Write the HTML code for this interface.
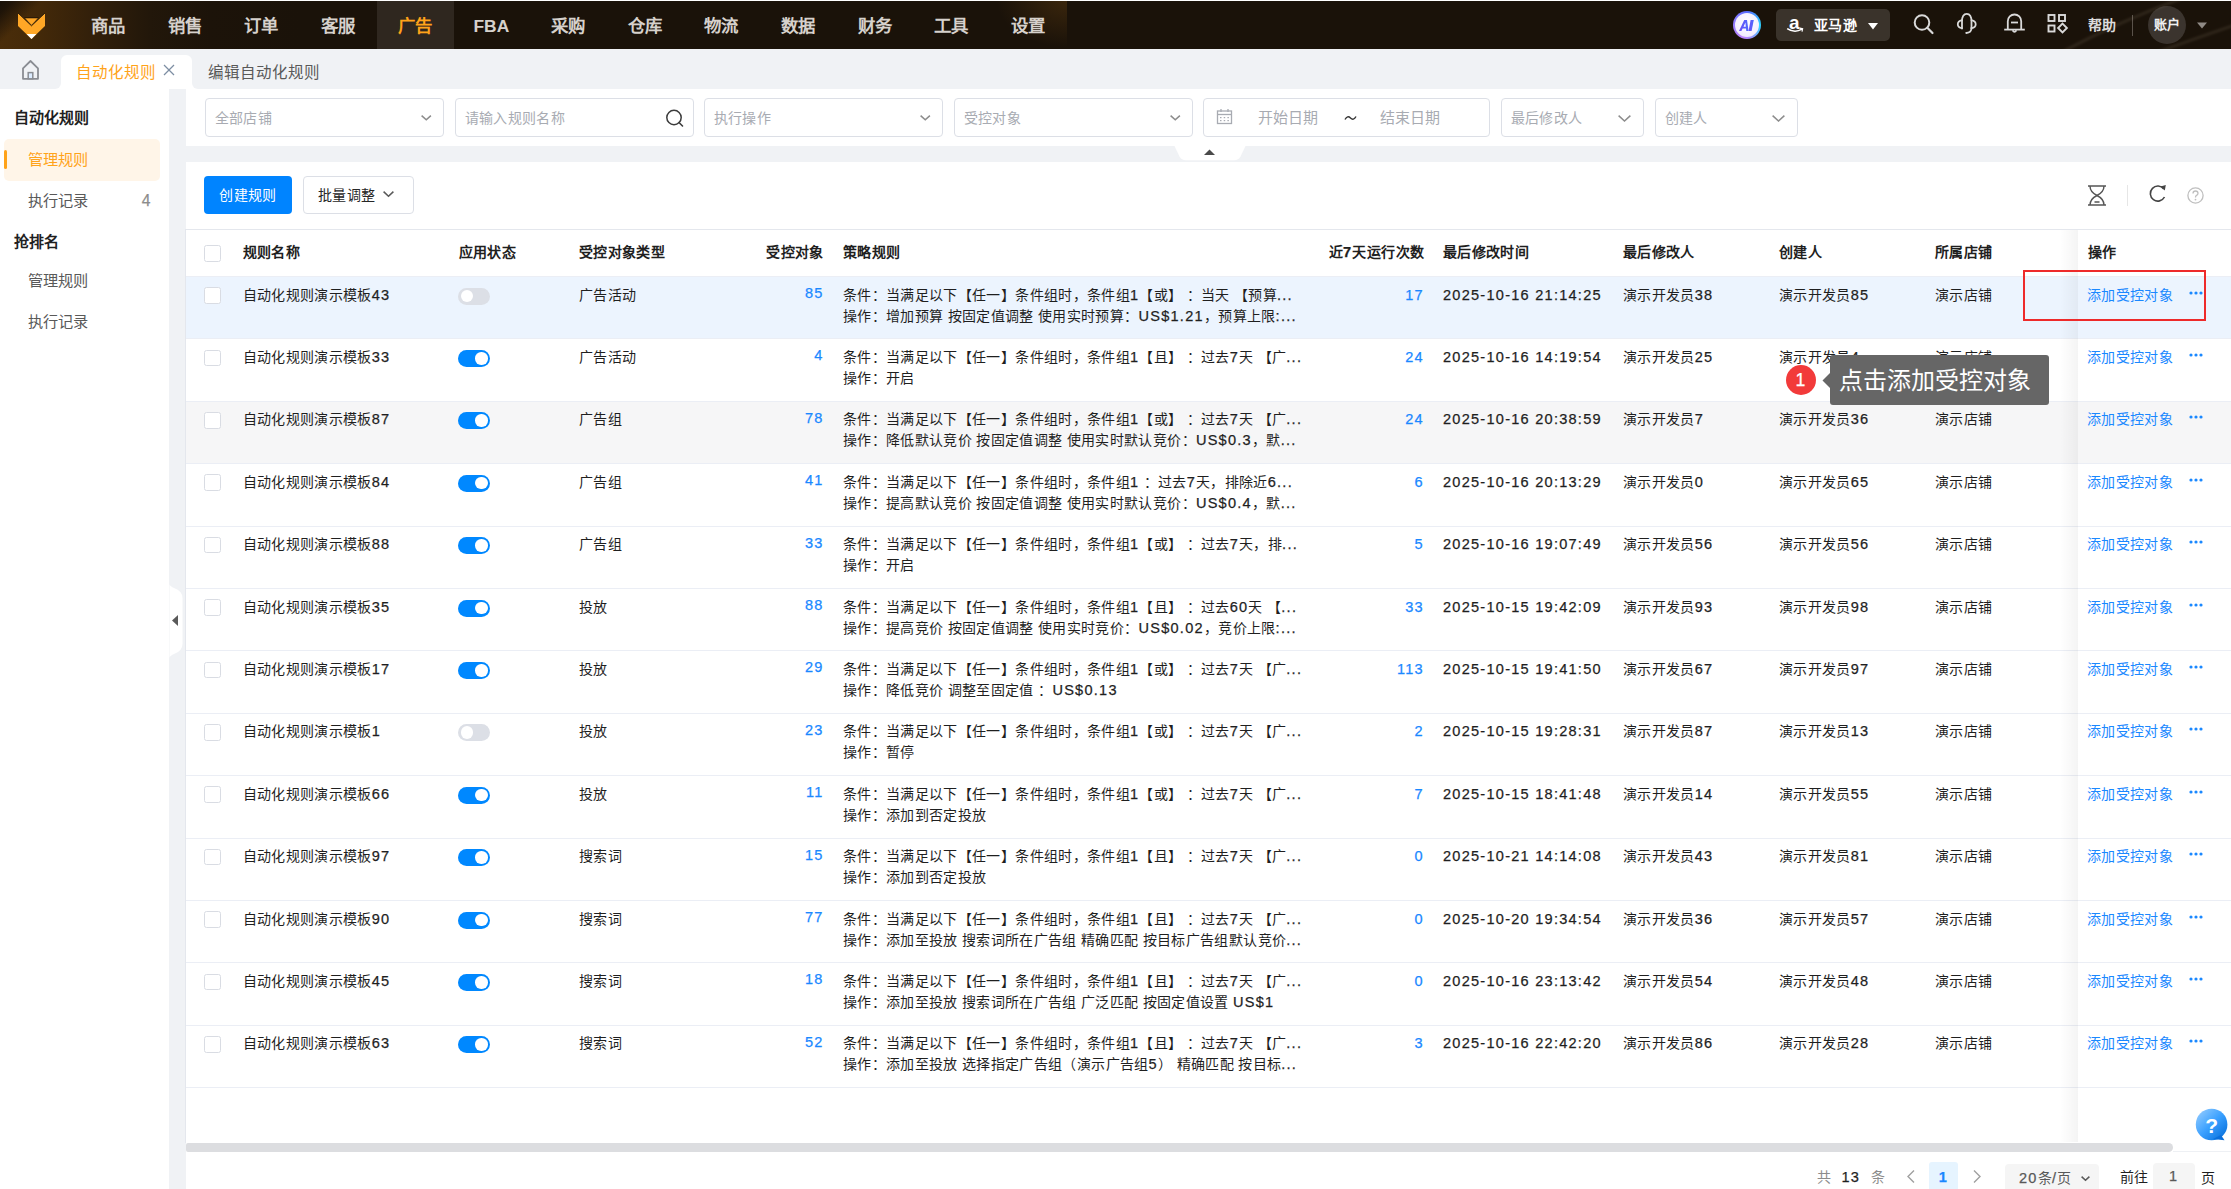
<!DOCTYPE html>
<html lang="zh-CN"><head><meta charset="utf-8"><title>自动化规则</title>
<style>
html,body{margin:0;padding:0;}
body{width:2231px;height:1189px;overflow:hidden;position:relative;background:#f0f2f5;font-family:"Liberation Sans",sans-serif;letter-spacing:0.35px;}
.a{font-size:1.04em;letter-spacing:1.25px;-webkit-text-stroke:0.25px currentColor;}
</style></head><body>
<div style="position:absolute;left:0.00px;top:0.00px;width:2231.00px;height:1.00px;background:#fff"></div>
<div style="position:absolute;left:0.00px;top:1.00px;width:2231.00px;height:48.00px;background:#1a1209"></div>
<div style="position:absolute;left:0;top:1px;width:1067px;height:48px;background:linear-gradient(135deg,rgba(24,16,8,1) 0px,rgba(24,16,8,0.85) 9px,rgba(24,16,8,0) 30px) 0 0/80px 48px no-repeat,radial-gradient(ellipse 70px 46px at 100% 0%,rgba(110,70,18,0.38),rgba(26,18,9,0)) 100% 0/80px 48px no-repeat,linear-gradient(90deg,#4a2d0a 0px,#432909 40px,#33200a 90px,#22170a 150px,#1c1309 210px,#1a1209 300px)"></div>
<svg style="position:absolute;left:17px;top:12px" width="30" height="29" viewBox="17 12 30 29">
<polygon points="18,13 31.5,25.5 45,13 45,26 31.5,39 18,26" fill="#ffa726"/>
<polygon points="25,18 38,18 31.5,25" fill="#ffa726"/>
<polyline points="18,13 31.5,25.8 45,13" fill="none" stroke="#1e1408" stroke-width="0.9"/>
<line x1="24.5" y1="17.8" x2="38.5" y2="17.8" stroke="#1e1408" stroke-width="0.9"/>
<polygon points="26.6,34 36.4,34 31.5,39" fill="#fff"/>
</svg>
<div style="position:absolute;left:69.67px;top:15.7px;width:76.67px;text-align:center;letter-spacing:0;font-size:17.4px;line-height:20px;font-weight:700;color:#d6d1cc;white-space:nowrap">商品</div>
<div style="position:absolute;left:146.34px;top:15.7px;width:76.67px;text-align:center;letter-spacing:0;font-size:17.4px;line-height:20px;font-weight:700;color:#d6d1cc;white-space:nowrap">销售</div>
<div style="position:absolute;left:223.01px;top:15.7px;width:76.67px;text-align:center;letter-spacing:0;font-size:17.4px;line-height:20px;font-weight:700;color:#d6d1cc;white-space:nowrap">订单</div>
<div style="position:absolute;left:299.68px;top:15.7px;width:76.67px;text-align:center;letter-spacing:0;font-size:17.4px;line-height:20px;font-weight:700;color:#d6d1cc;white-space:nowrap">客服</div>
<div style="position:absolute;left:376.85px;top:1.00px;width:76.67px;height:48.00px;background:#2f271f"></div>
<div style="position:absolute;left:376.35px;top:15.7px;width:76.67px;text-align:center;letter-spacing:0;font-size:17.4px;line-height:20px;font-weight:700;color:#ffa31a;white-space:nowrap">广告</div>
<div style="position:absolute;left:453.02px;top:15.7px;width:76.67px;text-align:center;letter-spacing:0;font-size:17.4px;line-height:20px;font-weight:700;color:#d6d1cc;white-space:nowrap">FBA</div>
<div style="position:absolute;left:529.69px;top:15.7px;width:76.67px;text-align:center;letter-spacing:0;font-size:17.4px;line-height:20px;font-weight:700;color:#d6d1cc;white-space:nowrap">采购</div>
<div style="position:absolute;left:606.36px;top:15.7px;width:76.67px;text-align:center;letter-spacing:0;font-size:17.4px;line-height:20px;font-weight:700;color:#d6d1cc;white-space:nowrap">仓库</div>
<div style="position:absolute;left:683.03px;top:15.7px;width:76.67px;text-align:center;letter-spacing:0;font-size:17.4px;line-height:20px;font-weight:700;color:#d6d1cc;white-space:nowrap">物流</div>
<div style="position:absolute;left:759.70px;top:15.7px;width:76.67px;text-align:center;letter-spacing:0;font-size:17.4px;line-height:20px;font-weight:700;color:#d6d1cc;white-space:nowrap">数据</div>
<div style="position:absolute;left:836.37px;top:15.7px;width:76.67px;text-align:center;letter-spacing:0;font-size:17.4px;line-height:20px;font-weight:700;color:#d6d1cc;white-space:nowrap">财务</div>
<div style="position:absolute;left:913.04px;top:15.7px;width:76.67px;text-align:center;letter-spacing:0;font-size:17.4px;line-height:20px;font-weight:700;color:#d6d1cc;white-space:nowrap">工具</div>
<div style="position:absolute;left:989.71px;top:15.7px;width:76.67px;text-align:center;letter-spacing:0;font-size:17.4px;line-height:20px;font-weight:700;color:#d6d1cc;white-space:nowrap">设置</div>
<div style="position:absolute;left:1733px;top:11px;width:28px;height:28px;border-radius:50%;background:conic-gradient(from 200deg,#c084fc,#8b7bff 90deg,#5a6cff 160deg,#2ad4ff 250deg,#a98bff 330deg,#c084fc);"></div>
<div style="position:absolute;left:1735px;top:13px;width:24px;height:24px;border-radius:50%;background:radial-gradient(circle at 50% 40%,#ffffff,#f4efff 65%,#e6dcff);"></div>
<svg style="position:absolute;left:1738px;top:19px" width="18" height="13" viewBox="0 0 18 13"><defs><linearGradient id="aig" x1="0" y1="0" x2="1" y2="0"><stop offset="0" stop-color="#6a4df5"/><stop offset="1" stop-color="#4f6bff"/></linearGradient></defs>
<path d="M1 12 L6.2 1 H9 L10.6 12 H8.3 L8 9.6 H4.6 L3.4 12 Z M5.5 7.7 H7.8 L7.4 3.6 Z" fill="url(#aig)"/><path d="M12.6 1 H15.8 L13.6 12 H10.6 Z" fill="url(#aig)"/></svg>
<div style="position:absolute;left:1776.00px;top:9.00px;width:114.00px;height:32.00px;background:#3a332b;border-radius:5px"></div>
<svg style="position:absolute;left:1786px;top:14px" width="20" height="20" viewBox="0 0 20 20">
<text x="3" y="15" font-family="Liberation Sans" font-weight="bold" font-size="19" fill="#fff">a</text>
<path d="M1.2 14.6 Q8.5 19.5 16 15.2" stroke="#fff" stroke-width="1.5" fill="none"/>
<path d="M13.8 14.2 L16.6 14.8 L16 17.6" stroke="#fff" stroke-width="1.2" fill="none"/>
</svg>
<div style="position:absolute;left:1814.00px;top:15.00px;font-size:14px;line-height:20px;color:#ffffff;font-weight:700;white-space:nowrap;">亚马逊</div>
<svg style="position:absolute;left:1868px;top:22px" width="10" height="8" viewBox="0 0 10 8"><polygon points="0,1 10,1 5,7.5" fill="#fff"/></svg>
<svg style="position:absolute;left:1912px;top:13px" width="24" height="22" viewBox="0 0 24 22">
<circle cx="10" cy="9.5" r="7.3" stroke="#d9d9d9" stroke-width="2" fill="none"/>
<line x1="15.3" y1="14.8" x2="20.5" y2="20" stroke="#d9d9d9" stroke-width="2.2" stroke-linecap="round"/></svg>
<svg style="position:absolute;left:1955px;top:12px" width="24" height="24" viewBox="0 0 24 24" fill="none" stroke="#d9d9d9" stroke-width="1.8" stroke-linecap="round">
<path d="M7 16.5 V9.5 Q7 1.8 11.75 1.8 Q16.5 1.8 16.5 9.5 V16.5"/>
<path d="M7 8.2 Q2.8 9 2.8 12.3 Q2.8 15.6 7 16.2"/>
<path d="M16.5 8.2 Q20.7 9 20.7 12.3 Q20.7 15.6 16.5 16.2"/>
<path d="M16.5 16 Q16.5 20.6 11.2 21"/></svg>
<svg style="position:absolute;left:2003px;top:12px" width="24" height="24" viewBox="0 0 24 24" fill="none" stroke="#d9d9d9" stroke-width="1.8">
<path d="M4.8 17.5 V9.2 A6.7 6.7 0 0 1 18.2 9.2 V17.5"/>
<line x1="1.2" y1="17.6" x2="21.8" y2="17.6"/>
<line x1="8" y1="10.5" x2="15" y2="10.5"/>
<path d="M9.6 18.2 Q11.5 21.6 13.4 18.2"/></svg>
<svg style="position:absolute;left:2046px;top:12px" width="24" height="24" viewBox="0 0 24 24" fill="none" stroke="#d9d9d9" stroke-width="1.9">
<rect x="2.5" y="3" width="6" height="6"/><rect x="13" y="3" width="6" height="6"/><rect x="2.5" y="13.5" width="6" height="6"/>
<polygon points="16.5,11.6 20.9,16 16.5,20.4 12.1,16"/></svg>
<div style="position:absolute;left:2088.00px;top:15.00px;font-size:14px;line-height:20px;color:#dcdcdc;font-weight:700;white-space:nowrap;">帮助</div>
<div style="position:absolute;left:2132.00px;top:15.00px;width:1.00px;height:21.00px;background:#5a524a"></div>
<div style="position:absolute;left:2148.00px;top:6.00px;width:38.00px;height:38.00px;background:#3b342e;border-radius:50%"></div>
<div style="position:absolute;left:2151.00px;top:15.00px;font-size:13px;line-height:20px;color:#f0f0f0;font-weight:700;white-space:nowrap;width:32px;text-align:center">账户</div>
<svg style="position:absolute;left:2196px;top:21px" width="12" height="9" viewBox="0 0 12 9"><polygon points="1,1.5 11,1.5 6,7.5" fill="#8f8a85"/></svg>
<svg style="position:absolute;left:2060px;top:1px" width="171" height="48" viewBox="0 0 171 48">
<defs><filter id="bl" x="-20%" y="-50%" width="140%" height="200%"><feGaussianBlur stdDeviation="1.2"/></filter></defs>
<g filter="url(#bl)" stroke="rgba(255,235,200,0.09)" stroke-width="3" fill="none">
<path d="M0 52 Q60 20 125 -4"/><path d="M95 52 Q140 36 175 24"/></g></svg>
<div style="position:absolute;left:0.00px;top:49.00px;width:2231.00px;height:40.00px;background:#fff"></div>
<div style="position:absolute;left:169.50px;top:83.00px;width:16.00px;height:6.00px;background:#f0f2f5"></div>
<div style="position:absolute;left:0.00px;top:49.00px;width:2231.00px;height:13.00px;background:#f0f2f5"></div>
<div style="position:absolute;left:0.00px;top:49.00px;width:61.00px;height:40.00px;background:#f0f2f5;border-bottom-right-radius:6px"></div>
<div style="position:absolute;left:192.00px;top:49.00px;width:2039.00px;height:40.00px;background:#f0f2f5;border-bottom-left-radius:6px"></div>
<svg style="position:absolute;left:20px;top:58px" width="22" height="23" viewBox="0 0 22 23">
<path d="M3 20.8 V10.3 L10.5 3 L18 10.3 V20.8 Z" stroke="#8a8d93" stroke-width="1.8" fill="none" stroke-linejoin="round"/>
<rect x="8.2" y="14.6" width="4.6" height="6.2" stroke="#8a8d93" stroke-width="1.5" fill="#dcecff"/></svg>
<div style="position:absolute;left:61.00px;top:55.00px;width:131.00px;height:34.00px;background:#fff;border-radius:6px 6px 0 0"></div>
<div style="position:absolute;left:75.80px;top:62.50px;font-size:15.5px;line-height:20px;color:#ffa31a;font-weight:400;white-space:nowrap;letter-spacing:0;">自动化规则</div>
<svg style="position:absolute;left:163px;top:64px" width="12" height="12" viewBox="0 0 12 12">
<line x1="1" y1="1" x2="11" y2="11" stroke="#7d8ea3" stroke-width="1.3"/><line x1="11" y1="1" x2="1" y2="11" stroke="#7d8ea3" stroke-width="1.3"/></svg>
<div style="position:absolute;left:208.00px;top:62.50px;font-size:15.5px;line-height:20px;color:#595959;font-weight:400;white-space:nowrap;letter-spacing:0;">编辑自动化规则</div>
<div style="position:absolute;left:0.00px;top:89.00px;width:169.20px;height:1100.00px;background:#fff"></div>
<div style="position:absolute;left:169.20px;top:89.00px;width:16.30px;height:1100.00px;background:#f0f2f5"></div>
<svg style="position:absolute;left:169px;top:584px" width="15" height="74" viewBox="0 0 15 74">
<path d="M0.5 0 Q0.5 2 5 4 Q13.5 7 13.5 14 V60 Q13.5 67 5 70 Q0.5 72 0.5 74 Z" fill="#fff"/>
<polygon points="3,36.5 9,31 9,42" fill="#5a5a5a"/></svg>
<div style="position:absolute;left:14.00px;top:108.00px;font-size:15px;line-height:20px;color:#1f1f1f;font-weight:700;white-space:nowrap;letter-spacing:0;">自动化规则</div>
<div style="position:absolute;left:4.00px;top:139.00px;width:156.00px;height:41.50px;background:#fff5e8;border-radius:5px"></div>
<div style="position:absolute;left:4.00px;top:150.00px;width:3.00px;height:19.00px;background:#ffa31a;border-radius:2px"></div>
<div style="position:absolute;left:28.00px;top:149.50px;font-size:15.2px;line-height:20px;color:#ffa31a;font-weight:400;white-space:nowrap;letter-spacing:0;">管理规则</div>
<div style="position:absolute;left:28.00px;top:190.50px;font-size:15.2px;line-height:20px;color:#595959;font-weight:400;white-space:nowrap;letter-spacing:0;">执行记录</div>
<div style="position:absolute;right:2079.30px;top:190.50px;font-size:15px;line-height:20px;color:#8c8c8c;font-weight:400;white-space:nowrap;letter-spacing:0;"><span class="a">4</span></div>
<div style="position:absolute;left:13.50px;top:231.50px;font-size:15px;line-height:20px;color:#1f1f1f;font-weight:700;white-space:nowrap;letter-spacing:0;">抢排名</div>
<div style="position:absolute;left:28.00px;top:271.00px;font-size:15.2px;line-height:20px;color:#595959;font-weight:400;white-space:nowrap;letter-spacing:0;">管理规则</div>
<div style="position:absolute;left:28.00px;top:312.00px;font-size:15.2px;line-height:20px;color:#595959;font-weight:400;white-space:nowrap;letter-spacing:0;">执行记录</div>
<div style="position:absolute;left:185.50px;top:89.00px;width:2045.50px;height:57.00px;background:#fff"></div>
<div style="position:absolute;left:204.50px;top:98.00px;width:239.00px;height:39.00px;box-sizing:border-box;border:1px solid #dcdfe6;border-radius:4px;background:#fff"></div>
<div style="position:absolute;left:214.50px;top:108.00px;font-size:14px;line-height:20px;color:#a8abb2;font-weight:400;white-space:nowrap;">全部店铺</div>
<svg style="position:absolute;left:420.20px;top:114.00px" width="12.50" height="8.00" viewBox="0 0 12.50 8.00"><polyline points="1.6,1.6 6.25,5.80 10.90,1.6" stroke="#8c8c8c" stroke-width="1.5" fill="none"/></svg>
<div style="position:absolute;left:454.50px;top:98.00px;width:239.00px;height:39.00px;box-sizing:border-box;border:1px solid #dcdfe6;border-radius:4px;background:#fff"></div>
<div style="position:absolute;left:464.50px;top:108.00px;font-size:14px;line-height:20px;color:#a8abb2;font-weight:400;white-space:nowrap;">请输入规则名称</div>
<svg style="position:absolute;left:664.5px;top:108px" width="20" height="20" viewBox="0 0 20 20">
<circle cx="9" cy="9.5" r="7.2" stroke="#3c3c3c" stroke-width="1.5" fill="none"/><line x1="14" y1="14.5" x2="17.5" y2="18" stroke="#3c3c3c" stroke-width="1.6" stroke-linecap="round"/></svg>
<div style="position:absolute;left:703.50px;top:98.00px;width:239.00px;height:39.00px;box-sizing:border-box;border:1px solid #dcdfe6;border-radius:4px;background:#fff"></div>
<div style="position:absolute;left:713.50px;top:108.00px;font-size:14px;line-height:20px;color:#a8abb2;font-weight:400;white-space:nowrap;">执行操作</div>
<svg style="position:absolute;left:919.20px;top:114.00px" width="12.50" height="8.00" viewBox="0 0 12.50 8.00"><polyline points="1.6,1.6 6.25,5.80 10.90,1.6" stroke="#8c8c8c" stroke-width="1.5" fill="none"/></svg>
<div style="position:absolute;left:953.50px;top:98.00px;width:239.00px;height:39.00px;box-sizing:border-box;border:1px solid #dcdfe6;border-radius:4px;background:#fff"></div>
<div style="position:absolute;left:963.50px;top:108.00px;font-size:14px;line-height:20px;color:#a8abb2;font-weight:400;white-space:nowrap;">受控对象</div>
<svg style="position:absolute;left:1169.20px;top:114.00px" width="12.50" height="8.00" viewBox="0 0 12.50 8.00"><polyline points="1.6,1.6 6.25,5.80 10.90,1.6" stroke="#8c8c8c" stroke-width="1.5" fill="none"/></svg>
<div style="position:absolute;left:1500.50px;top:98.00px;width:143.00px;height:39.00px;box-sizing:border-box;border:1px solid #dcdfe6;border-radius:4px;background:#fff"></div>
<div style="position:absolute;left:1510.50px;top:108.00px;font-size:14px;line-height:20px;color:#a8abb2;font-weight:400;white-space:nowrap;">最后修改人</div>
<svg style="position:absolute;left:1617.30px;top:113.70px" width="15.00" height="9.20" viewBox="0 0 15.00 9.20"><polyline points="1.6,1.6 7.50,7.00 13.40,1.6" stroke="#8c8c8c" stroke-width="1.5" fill="none"/></svg>
<div style="position:absolute;left:1654.50px;top:98.00px;width:143.00px;height:39.00px;box-sizing:border-box;border:1px solid #dcdfe6;border-radius:4px;background:#fff"></div>
<div style="position:absolute;left:1664.50px;top:108.00px;font-size:14px;line-height:20px;color:#a8abb2;font-weight:400;white-space:nowrap;">创建人</div>
<svg style="position:absolute;left:1771.30px;top:113.70px" width="15.00" height="9.20" viewBox="0 0 15.00 9.20"><polyline points="1.6,1.6 7.50,7.00 13.40,1.6" stroke="#8c8c8c" stroke-width="1.5" fill="none"/></svg>
<div style="position:absolute;left:1202.50px;top:98.00px;width:287.00px;height:39.00px;box-sizing:border-box;border:1px solid #dcdfe6;border-radius:4px;background:#fff"></div>
<svg style="position:absolute;left:1216px;top:108px" width="17" height="17" viewBox="0 0 17 17">
<rect x="1.5" y="3" width="14" height="12.5" stroke="#a8abb2" stroke-width="1.3" fill="none"/>
<line x1="1.5" y1="6.5" x2="15.5" y2="6.5" stroke="#a8abb2" stroke-width="1.3"/>
<line x1="5" y1="1" x2="5" y2="4" stroke="#a8abb2" stroke-width="1.3"/><line x1="12" y1="1" x2="12" y2="4" stroke="#a8abb2" stroke-width="1.3"/>
<g fill="#a8abb2"><rect x="4" y="9" width="1.5" height="1.2"/><rect x="7.7" y="9" width="1.5" height="1.2"/><rect x="11.4" y="9" width="1.5" height="1.2"/>
<rect x="4" y="12" width="1.5" height="1.2"/><rect x="7.7" y="12" width="1.5" height="1.2"/><rect x="11.4" y="12" width="1.5" height="1.2"/></g></svg>
<div style="position:absolute;left:1257.50px;top:108.00px;font-size:15px;line-height:20px;color:#a8abb2;font-weight:400;white-space:nowrap;letter-spacing:0;">开始日期</div>
<svg style="position:absolute;left:1344px;top:114px" width="13" height="8" viewBox="0 0 13 8"><path d="M1 5.5 Q3.5 1 6.5 4 Q9.5 7 12 2.5" stroke="#333" stroke-width="1.4" fill="none"/></svg>
<div style="position:absolute;left:1380.00px;top:108.00px;font-size:15px;line-height:20px;color:#a8abb2;font-weight:400;white-space:nowrap;letter-spacing:0;">结束日期</div>
<svg style="position:absolute;left:1174px;top:146px" width="72" height="15" viewBox="0 0 72 15">
<path d="M0.5 0 H71.5 L66.5 10.5 Q64.5 14.3 60 14.3 H12 Q7.5 14.3 5.5 10.5 Z" fill="#fff"/>
<polygon points="30,9 41,9 35.5,3.5" fill="#4a4a4a"/></svg>
<div style="position:absolute;left:185.50px;top:161.70px;width:2045.50px;height:1027.30px;background:#fff"></div>
<div style="position:absolute;left:204.00px;top:176.00px;width:88.00px;height:38.00px;background:#0084ff;border-radius:4px"></div>
<div style="position:absolute;left:204.00px;top:185.00px;font-size:14px;line-height:20px;color:#ffffff;font-weight:500;white-space:nowrap;width:88px;text-align:center">创建规则</div>
<div style="position:absolute;left:302.50px;top:176.00px;width:111.00px;height:38.00px;box-sizing:border-box;border:1px solid #dcdfe6;border-radius:4px;background:#fff"></div>
<div style="position:absolute;left:318.00px;top:185.00px;font-size:14px;line-height:20px;color:#262626;font-weight:500;white-space:nowrap;">批量调整</div>
<svg style="position:absolute;left:382.00px;top:190.00px" width="13.00" height="8.50" viewBox="0 0 13.00 8.50"><polyline points="1.6,1.6 6.50,6.30 11.40,1.6" stroke="#595959" stroke-width="1.5" fill="none"/></svg>
<svg style="position:absolute;left:2086px;top:184px" width="22" height="23" viewBox="0 0 22 23">
<line x1="2" y1="2" x2="20" y2="2" stroke="#555" stroke-width="1.5"/><line x1="2" y1="21" x2="20" y2="21" stroke="#555" stroke-width="1.5"/>
<path d="M4 2 Q4 8 11 11.5 Q18 8 18 2" stroke="#555" stroke-width="1.4" fill="none"/>
<path d="M4 21 Q4 15 11 11.5 Q18 15 18 21" stroke="#555" stroke-width="1.4" fill="none"/>
<line x1="8.5" y1="18" x2="13.5" y2="18" stroke="#555" stroke-width="1.5"/></svg>
<div style="position:absolute;left:2127.00px;top:185.00px;width:1.00px;height:21.00px;background:#e6e6e6"></div>
<svg style="position:absolute;left:2147px;top:183px" width="21" height="21" viewBox="0 0 21 21">
<path d="M16.8 6 A7.5 7.5 0 1 0 17.5 14" stroke="#444" stroke-width="1.6" fill="none"/>
<polygon points="13.5,3.5 18.8,2 17.8,7.5" fill="#444"/></svg>
<svg style="position:absolute;left:2186px;top:186px" width="19" height="19" viewBox="0 0 19 19">
<circle cx="9.5" cy="9.5" r="7.6" stroke="#bfbfbf" stroke-width="1.3" fill="none"/>
<path d="M7 7.5 Q7 5 9.5 5 Q12 5 12 7.3 Q12 8.8 10.2 9.6 Q9.5 10 9.5 11.5" stroke="#bfbfbf" stroke-width="1.3" fill="none"/>
<circle cx="9.5" cy="13.6" r="0.9" fill="#bfbfbf"/></svg>
<div style="position:absolute;left:185.50px;top:228.90px;width:2045.50px;height:1.00px;background:#e4e7ed"></div>
<div style="position:absolute;left:185.20px;top:229.40px;width:1.00px;height:913.60px;background:#e4e7ed"></div>
<div style="position:absolute;left:186.00px;top:276.00px;width:2045.00px;height:1.00px;background:#ebeef5"></div>
<div style="position:absolute;left:204.30px;top:245.20px;width:16.80px;height:16.60px;box-sizing:border-box;border:1.5px solid #d9dce3;border-radius:2.5px;background:#fff"></div>
<div style="position:absolute;left:242.50px;top:242.00px;font-size:14px;line-height:20px;color:#1f1f1f;font-weight:700;white-space:nowrap;">规则名称</div>
<div style="position:absolute;left:458.80px;top:242.00px;font-size:14px;line-height:20px;color:#1f1f1f;font-weight:700;white-space:nowrap;">应用状态</div>
<div style="position:absolute;left:578.90px;top:242.00px;font-size:14px;line-height:20px;color:#1f1f1f;font-weight:700;white-space:nowrap;">受控对象类型</div>
<div style="position:absolute;right:1407.20px;top:242.00px;font-size:14px;line-height:20px;color:#1f1f1f;font-weight:700;white-space:nowrap;">受控对象</div>
<div style="position:absolute;left:843.00px;top:242.00px;font-size:14px;line-height:20px;color:#1f1f1f;font-weight:700;white-space:nowrap;">策略规则</div>
<div style="position:absolute;right:806.80px;top:242.00px;font-size:14px;line-height:20px;color:#1f1f1f;font-weight:700;white-space:nowrap;">近<span class="a">7</span>天运行次数</div>
<div style="position:absolute;left:1443.00px;top:242.00px;font-size:14px;line-height:20px;color:#1f1f1f;font-weight:700;white-space:nowrap;">最后修改时间</div>
<div style="position:absolute;left:1623.00px;top:242.00px;font-size:14px;line-height:20px;color:#1f1f1f;font-weight:700;white-space:nowrap;">最后修改人</div>
<div style="position:absolute;left:1779.00px;top:242.00px;font-size:14px;line-height:20px;color:#1f1f1f;font-weight:700;white-space:nowrap;">创建人</div>
<div style="position:absolute;left:1935.00px;top:242.00px;font-size:14px;line-height:20px;color:#1f1f1f;font-weight:700;white-space:nowrap;">所属店铺</div>
<div style="position:absolute;left:2088.00px;top:242.00px;font-size:14px;line-height:20px;color:#1f1f1f;font-weight:700;white-space:nowrap;">操作</div>
<div style="position:absolute;left:186.00px;top:277.00px;width:2045.00px;height:61.40px;background:#ecf4fe"></div>
<div style="position:absolute;left:186.00px;top:338.40px;width:2045.00px;height:1.00px;background:#ebeef5"></div>
<div style="position:absolute;left:204.00px;top:287.20px;width:16.80px;height:16.60px;box-sizing:border-box;border:1.5px solid #d9dce3;border-radius:2.5px;background:#fff"></div>
<div style="position:absolute;left:242.50px;top:284.50px;font-size:14px;line-height:20px;color:#1f1f1f;font-weight:400;white-space:nowrap;">自动化规则演示模板<span class="a">43</span></div>
<div style="position:absolute;left:458px;top:287.60px;width:32px;height:17px;border-radius:8.5px;background:#dcdfe6"></div><div style="position:absolute;left:460.5px;top:289.60px;width:12.5px;height:12.5px;border-radius:50%;background:#fff"></div>
<div style="position:absolute;left:578.90px;top:284.50px;font-size:14px;line-height:20px;color:#1f1f1f;font-weight:400;white-space:nowrap;">广告活动</div>
<div style="position:absolute;right:1407.30px;top:283.00px;font-size:14px;line-height:20px;color:#1a88ff;font-weight:400;white-space:nowrap;"><span class="a">85</span></div>
<div style="position:absolute;left:843.00px;top:284.50px;font-size:14px;line-height:20px;color:#1f1f1f;font-weight:400;white-space:nowrap;">条件：当满足以下【任一】条件组时，条件组<span class="a">1</span>【或】 ：当天 【预算<span class="a">...</span></div>
<div style="position:absolute;left:843.00px;top:305.60px;font-size:14px;line-height:20px;color:#1f1f1f;font-weight:400;white-space:nowrap;">操作：增加预算 按固定值调整 使用实时预算：<span class="a">US$1.21</span>，预算上限<span class="a">:...</span></div>
<div style="position:absolute;right:807.10px;top:284.50px;font-size:14px;line-height:20px;color:#1a88ff;font-weight:400;white-space:nowrap;"><span class="a">17</span></div>
<div style="position:absolute;left:1443.00px;top:284.50px;font-size:14px;line-height:20px;color:#1f1f1f;font-weight:400;white-space:nowrap;"><span class="a">2025-10-16 21:14:25</span></div>
<div style="position:absolute;left:1623.00px;top:284.50px;font-size:14px;line-height:20px;color:#1f1f1f;font-weight:400;white-space:nowrap;">演示开发员<span class="a">38</span></div>
<div style="position:absolute;left:1779.00px;top:284.50px;font-size:14px;line-height:20px;color:#1f1f1f;font-weight:400;white-space:nowrap;">演示开发员<span class="a">85</span></div>
<div style="position:absolute;left:1935.00px;top:284.50px;font-size:14px;line-height:20px;color:#1f1f1f;font-weight:400;white-space:nowrap;">演示店铺</div>
<div style="position:absolute;left:2087.00px;top:284.50px;font-size:14px;line-height:20px;color:#1a88ff;font-weight:400;white-space:nowrap;">添加受控对象</div>
<svg style="position:absolute;left:2189px;top:289.50px" width="14" height="6" viewBox="0 0 14 6"><g fill="#1a88ff"><circle cx="2" cy="3" r="1.6"/><circle cx="7" cy="3" r="1.6"/><circle cx="12" cy="3" r="1.6"/></g></svg>
<div style="position:absolute;left:186.00px;top:339.40px;width:2045.00px;height:61.40px;background:#fff"></div>
<div style="position:absolute;left:186.00px;top:400.80px;width:2045.00px;height:1.00px;background:#ebeef5"></div>
<div style="position:absolute;left:204.00px;top:349.60px;width:16.80px;height:16.60px;box-sizing:border-box;border:1.5px solid #d9dce3;border-radius:2.5px;background:#fff"></div>
<div style="position:absolute;left:242.50px;top:346.90px;font-size:14px;line-height:20px;color:#1f1f1f;font-weight:400;white-space:nowrap;">自动化规则演示模板<span class="a">33</span></div>
<div style="position:absolute;left:458px;top:350.00px;width:32px;height:17px;border-radius:8.5px;background:#0088ff"></div><div style="position:absolute;left:475px;top:352.00px;width:12.5px;height:12.5px;border-radius:50%;background:#fff"></div>
<div style="position:absolute;left:578.90px;top:346.90px;font-size:14px;line-height:20px;color:#1f1f1f;font-weight:400;white-space:nowrap;">广告活动</div>
<div style="position:absolute;right:1407.30px;top:345.40px;font-size:14px;line-height:20px;color:#1a88ff;font-weight:400;white-space:nowrap;"><span class="a">4</span></div>
<div style="position:absolute;left:843.00px;top:346.90px;font-size:14px;line-height:20px;color:#1f1f1f;font-weight:400;white-space:nowrap;">条件：当满足以下【任一】条件组时，条件组<span class="a">1</span>【且】 ：过去<span class="a">7</span>天 【广<span class="a">...</span></div>
<div style="position:absolute;left:843.00px;top:368.00px;font-size:14px;line-height:20px;color:#1f1f1f;font-weight:400;white-space:nowrap;">操作：开启</div>
<div style="position:absolute;right:807.10px;top:346.90px;font-size:14px;line-height:20px;color:#1a88ff;font-weight:400;white-space:nowrap;"><span class="a">24</span></div>
<div style="position:absolute;left:1443.00px;top:346.90px;font-size:14px;line-height:20px;color:#1f1f1f;font-weight:400;white-space:nowrap;"><span class="a">2025-10-16 14:19:54</span></div>
<div style="position:absolute;left:1623.00px;top:346.90px;font-size:14px;line-height:20px;color:#1f1f1f;font-weight:400;white-space:nowrap;">演示开发员<span class="a">25</span></div>
<div style="position:absolute;left:1779.00px;top:346.90px;font-size:14px;line-height:20px;color:#1f1f1f;font-weight:400;white-space:nowrap;">演示开发员<span class="a">4</span></div>
<div style="position:absolute;left:1935.00px;top:346.90px;font-size:14px;line-height:20px;color:#1f1f1f;font-weight:400;white-space:nowrap;">演示店铺</div>
<div style="position:absolute;left:2087.00px;top:346.90px;font-size:14px;line-height:20px;color:#1a88ff;font-weight:400;white-space:nowrap;">添加受控对象</div>
<svg style="position:absolute;left:2189px;top:351.90px" width="14" height="6" viewBox="0 0 14 6"><g fill="#1a88ff"><circle cx="2" cy="3" r="1.6"/><circle cx="7" cy="3" r="1.6"/><circle cx="12" cy="3" r="1.6"/></g></svg>
<div style="position:absolute;left:186.00px;top:401.80px;width:2045.00px;height:61.40px;background:#f6f6f7"></div>
<div style="position:absolute;left:186.00px;top:463.20px;width:2045.00px;height:1.00px;background:#ebeef5"></div>
<div style="position:absolute;left:204.00px;top:412.00px;width:16.80px;height:16.60px;box-sizing:border-box;border:1.5px solid #d9dce3;border-radius:2.5px;background:#fff"></div>
<div style="position:absolute;left:242.50px;top:409.30px;font-size:14px;line-height:20px;color:#1f1f1f;font-weight:400;white-space:nowrap;">自动化规则演示模板<span class="a">87</span></div>
<div style="position:absolute;left:458px;top:412.40px;width:32px;height:17px;border-radius:8.5px;background:#0088ff"></div><div style="position:absolute;left:475px;top:414.40px;width:12.5px;height:12.5px;border-radius:50%;background:#fff"></div>
<div style="position:absolute;left:578.90px;top:409.30px;font-size:14px;line-height:20px;color:#1f1f1f;font-weight:400;white-space:nowrap;">广告组</div>
<div style="position:absolute;right:1407.30px;top:407.80px;font-size:14px;line-height:20px;color:#1a88ff;font-weight:400;white-space:nowrap;"><span class="a">78</span></div>
<div style="position:absolute;left:843.00px;top:409.30px;font-size:14px;line-height:20px;color:#1f1f1f;font-weight:400;white-space:nowrap;">条件：当满足以下【任一】条件组时，条件组<span class="a">1</span>【或】 ：过去<span class="a">7</span>天 【广<span class="a">...</span></div>
<div style="position:absolute;left:843.00px;top:430.40px;font-size:14px;line-height:20px;color:#1f1f1f;font-weight:400;white-space:nowrap;">操作：降低默认竞价 按固定值调整 使用实时默认竞价：<span class="a">US$0.3</span>，默<span class="a">...</span></div>
<div style="position:absolute;right:807.10px;top:409.30px;font-size:14px;line-height:20px;color:#1a88ff;font-weight:400;white-space:nowrap;"><span class="a">24</span></div>
<div style="position:absolute;left:1443.00px;top:409.30px;font-size:14px;line-height:20px;color:#1f1f1f;font-weight:400;white-space:nowrap;"><span class="a">2025-10-16 20:38:59</span></div>
<div style="position:absolute;left:1623.00px;top:409.30px;font-size:14px;line-height:20px;color:#1f1f1f;font-weight:400;white-space:nowrap;">演示开发员<span class="a">7</span></div>
<div style="position:absolute;left:1779.00px;top:409.30px;font-size:14px;line-height:20px;color:#1f1f1f;font-weight:400;white-space:nowrap;">演示开发员<span class="a">36</span></div>
<div style="position:absolute;left:1935.00px;top:409.30px;font-size:14px;line-height:20px;color:#1f1f1f;font-weight:400;white-space:nowrap;">演示店铺</div>
<div style="position:absolute;left:2087.00px;top:409.30px;font-size:14px;line-height:20px;color:#1a88ff;font-weight:400;white-space:nowrap;">添加受控对象</div>
<svg style="position:absolute;left:2189px;top:414.30px" width="14" height="6" viewBox="0 0 14 6"><g fill="#1a88ff"><circle cx="2" cy="3" r="1.6"/><circle cx="7" cy="3" r="1.6"/><circle cx="12" cy="3" r="1.6"/></g></svg>
<div style="position:absolute;left:186.00px;top:464.20px;width:2045.00px;height:61.40px;background:#fff"></div>
<div style="position:absolute;left:186.00px;top:525.60px;width:2045.00px;height:1.00px;background:#ebeef5"></div>
<div style="position:absolute;left:204.00px;top:474.40px;width:16.80px;height:16.60px;box-sizing:border-box;border:1.5px solid #d9dce3;border-radius:2.5px;background:#fff"></div>
<div style="position:absolute;left:242.50px;top:471.70px;font-size:14px;line-height:20px;color:#1f1f1f;font-weight:400;white-space:nowrap;">自动化规则演示模板<span class="a">84</span></div>
<div style="position:absolute;left:458px;top:474.80px;width:32px;height:17px;border-radius:8.5px;background:#0088ff"></div><div style="position:absolute;left:475px;top:476.80px;width:12.5px;height:12.5px;border-radius:50%;background:#fff"></div>
<div style="position:absolute;left:578.90px;top:471.70px;font-size:14px;line-height:20px;color:#1f1f1f;font-weight:400;white-space:nowrap;">广告组</div>
<div style="position:absolute;right:1407.30px;top:470.20px;font-size:14px;line-height:20px;color:#1a88ff;font-weight:400;white-space:nowrap;"><span class="a">41</span></div>
<div style="position:absolute;left:843.00px;top:471.70px;font-size:14px;line-height:20px;color:#1f1f1f;font-weight:400;white-space:nowrap;">条件：当满足以下【任一】条件组时，条件组<span class="a">1</span> ：过去<span class="a">7</span>天，排除近<span class="a">6...</span></div>
<div style="position:absolute;left:843.00px;top:492.80px;font-size:14px;line-height:20px;color:#1f1f1f;font-weight:400;white-space:nowrap;">操作：提高默认竞价 按固定值调整 使用实时默认竞价：<span class="a">US$0.4</span>，默<span class="a">...</span></div>
<div style="position:absolute;right:807.10px;top:471.70px;font-size:14px;line-height:20px;color:#1a88ff;font-weight:400;white-space:nowrap;"><span class="a">6</span></div>
<div style="position:absolute;left:1443.00px;top:471.70px;font-size:14px;line-height:20px;color:#1f1f1f;font-weight:400;white-space:nowrap;"><span class="a">2025-10-16 20:13:29</span></div>
<div style="position:absolute;left:1623.00px;top:471.70px;font-size:14px;line-height:20px;color:#1f1f1f;font-weight:400;white-space:nowrap;">演示开发员<span class="a">0</span></div>
<div style="position:absolute;left:1779.00px;top:471.70px;font-size:14px;line-height:20px;color:#1f1f1f;font-weight:400;white-space:nowrap;">演示开发员<span class="a">65</span></div>
<div style="position:absolute;left:1935.00px;top:471.70px;font-size:14px;line-height:20px;color:#1f1f1f;font-weight:400;white-space:nowrap;">演示店铺</div>
<div style="position:absolute;left:2087.00px;top:471.70px;font-size:14px;line-height:20px;color:#1a88ff;font-weight:400;white-space:nowrap;">添加受控对象</div>
<svg style="position:absolute;left:2189px;top:476.70px" width="14" height="6" viewBox="0 0 14 6"><g fill="#1a88ff"><circle cx="2" cy="3" r="1.6"/><circle cx="7" cy="3" r="1.6"/><circle cx="12" cy="3" r="1.6"/></g></svg>
<div style="position:absolute;left:186.00px;top:526.60px;width:2045.00px;height:61.40px;background:#fff"></div>
<div style="position:absolute;left:186.00px;top:588.00px;width:2045.00px;height:1.00px;background:#ebeef5"></div>
<div style="position:absolute;left:204.00px;top:536.80px;width:16.80px;height:16.60px;box-sizing:border-box;border:1.5px solid #d9dce3;border-radius:2.5px;background:#fff"></div>
<div style="position:absolute;left:242.50px;top:534.10px;font-size:14px;line-height:20px;color:#1f1f1f;font-weight:400;white-space:nowrap;">自动化规则演示模板<span class="a">88</span></div>
<div style="position:absolute;left:458px;top:537.20px;width:32px;height:17px;border-radius:8.5px;background:#0088ff"></div><div style="position:absolute;left:475px;top:539.20px;width:12.5px;height:12.5px;border-radius:50%;background:#fff"></div>
<div style="position:absolute;left:578.90px;top:534.10px;font-size:14px;line-height:20px;color:#1f1f1f;font-weight:400;white-space:nowrap;">广告组</div>
<div style="position:absolute;right:1407.30px;top:532.60px;font-size:14px;line-height:20px;color:#1a88ff;font-weight:400;white-space:nowrap;"><span class="a">33</span></div>
<div style="position:absolute;left:843.00px;top:534.10px;font-size:14px;line-height:20px;color:#1f1f1f;font-weight:400;white-space:nowrap;">条件：当满足以下【任一】条件组时，条件组<span class="a">1</span>【或】 ：过去<span class="a">7</span>天，排<span class="a">...</span></div>
<div style="position:absolute;left:843.00px;top:555.20px;font-size:14px;line-height:20px;color:#1f1f1f;font-weight:400;white-space:nowrap;">操作：开启</div>
<div style="position:absolute;right:807.10px;top:534.10px;font-size:14px;line-height:20px;color:#1a88ff;font-weight:400;white-space:nowrap;"><span class="a">5</span></div>
<div style="position:absolute;left:1443.00px;top:534.10px;font-size:14px;line-height:20px;color:#1f1f1f;font-weight:400;white-space:nowrap;"><span class="a">2025-10-16 19:07:49</span></div>
<div style="position:absolute;left:1623.00px;top:534.10px;font-size:14px;line-height:20px;color:#1f1f1f;font-weight:400;white-space:nowrap;">演示开发员<span class="a">56</span></div>
<div style="position:absolute;left:1779.00px;top:534.10px;font-size:14px;line-height:20px;color:#1f1f1f;font-weight:400;white-space:nowrap;">演示开发员<span class="a">56</span></div>
<div style="position:absolute;left:1935.00px;top:534.10px;font-size:14px;line-height:20px;color:#1f1f1f;font-weight:400;white-space:nowrap;">演示店铺</div>
<div style="position:absolute;left:2087.00px;top:534.10px;font-size:14px;line-height:20px;color:#1a88ff;font-weight:400;white-space:nowrap;">添加受控对象</div>
<svg style="position:absolute;left:2189px;top:539.10px" width="14" height="6" viewBox="0 0 14 6"><g fill="#1a88ff"><circle cx="2" cy="3" r="1.6"/><circle cx="7" cy="3" r="1.6"/><circle cx="12" cy="3" r="1.6"/></g></svg>
<div style="position:absolute;left:186.00px;top:589.00px;width:2045.00px;height:61.40px;background:#fff"></div>
<div style="position:absolute;left:186.00px;top:650.40px;width:2045.00px;height:1.00px;background:#ebeef5"></div>
<div style="position:absolute;left:204.00px;top:599.20px;width:16.80px;height:16.60px;box-sizing:border-box;border:1.5px solid #d9dce3;border-radius:2.5px;background:#fff"></div>
<div style="position:absolute;left:242.50px;top:596.50px;font-size:14px;line-height:20px;color:#1f1f1f;font-weight:400;white-space:nowrap;">自动化规则演示模板<span class="a">35</span></div>
<div style="position:absolute;left:458px;top:599.60px;width:32px;height:17px;border-radius:8.5px;background:#0088ff"></div><div style="position:absolute;left:475px;top:601.60px;width:12.5px;height:12.5px;border-radius:50%;background:#fff"></div>
<div style="position:absolute;left:578.90px;top:596.50px;font-size:14px;line-height:20px;color:#1f1f1f;font-weight:400;white-space:nowrap;">投放</div>
<div style="position:absolute;right:1407.30px;top:595.00px;font-size:14px;line-height:20px;color:#1a88ff;font-weight:400;white-space:nowrap;"><span class="a">88</span></div>
<div style="position:absolute;left:843.00px;top:596.50px;font-size:14px;line-height:20px;color:#1f1f1f;font-weight:400;white-space:nowrap;">条件：当满足以下【任一】条件组时，条件组<span class="a">1</span>【且】 ：过去<span class="a">60</span>天 【<span class="a">...</span></div>
<div style="position:absolute;left:843.00px;top:617.60px;font-size:14px;line-height:20px;color:#1f1f1f;font-weight:400;white-space:nowrap;">操作：提高竞价 按固定值调整 使用实时竞价：<span class="a">US$0.02</span>，竞价上限<span class="a">:...</span></div>
<div style="position:absolute;right:807.10px;top:596.50px;font-size:14px;line-height:20px;color:#1a88ff;font-weight:400;white-space:nowrap;"><span class="a">33</span></div>
<div style="position:absolute;left:1443.00px;top:596.50px;font-size:14px;line-height:20px;color:#1f1f1f;font-weight:400;white-space:nowrap;"><span class="a">2025-10-15 19:42:09</span></div>
<div style="position:absolute;left:1623.00px;top:596.50px;font-size:14px;line-height:20px;color:#1f1f1f;font-weight:400;white-space:nowrap;">演示开发员<span class="a">93</span></div>
<div style="position:absolute;left:1779.00px;top:596.50px;font-size:14px;line-height:20px;color:#1f1f1f;font-weight:400;white-space:nowrap;">演示开发员<span class="a">98</span></div>
<div style="position:absolute;left:1935.00px;top:596.50px;font-size:14px;line-height:20px;color:#1f1f1f;font-weight:400;white-space:nowrap;">演示店铺</div>
<div style="position:absolute;left:2087.00px;top:596.50px;font-size:14px;line-height:20px;color:#1a88ff;font-weight:400;white-space:nowrap;">添加受控对象</div>
<svg style="position:absolute;left:2189px;top:601.50px" width="14" height="6" viewBox="0 0 14 6"><g fill="#1a88ff"><circle cx="2" cy="3" r="1.6"/><circle cx="7" cy="3" r="1.6"/><circle cx="12" cy="3" r="1.6"/></g></svg>
<div style="position:absolute;left:186.00px;top:651.40px;width:2045.00px;height:61.40px;background:#fff"></div>
<div style="position:absolute;left:186.00px;top:712.80px;width:2045.00px;height:1.00px;background:#ebeef5"></div>
<div style="position:absolute;left:204.00px;top:661.60px;width:16.80px;height:16.60px;box-sizing:border-box;border:1.5px solid #d9dce3;border-radius:2.5px;background:#fff"></div>
<div style="position:absolute;left:242.50px;top:658.90px;font-size:14px;line-height:20px;color:#1f1f1f;font-weight:400;white-space:nowrap;">自动化规则演示模板<span class="a">17</span></div>
<div style="position:absolute;left:458px;top:662.00px;width:32px;height:17px;border-radius:8.5px;background:#0088ff"></div><div style="position:absolute;left:475px;top:664.00px;width:12.5px;height:12.5px;border-radius:50%;background:#fff"></div>
<div style="position:absolute;left:578.90px;top:658.90px;font-size:14px;line-height:20px;color:#1f1f1f;font-weight:400;white-space:nowrap;">投放</div>
<div style="position:absolute;right:1407.30px;top:657.40px;font-size:14px;line-height:20px;color:#1a88ff;font-weight:400;white-space:nowrap;"><span class="a">29</span></div>
<div style="position:absolute;left:843.00px;top:658.90px;font-size:14px;line-height:20px;color:#1f1f1f;font-weight:400;white-space:nowrap;">条件：当满足以下【任一】条件组时，条件组<span class="a">1</span>【或】 ：过去<span class="a">7</span>天 【广<span class="a">...</span></div>
<div style="position:absolute;left:843.00px;top:680.00px;font-size:14px;line-height:20px;color:#1f1f1f;font-weight:400;white-space:nowrap;">操作：降低竞价 调整至固定值 ：<span class="a">US$0.13</span></div>
<div style="position:absolute;right:807.10px;top:658.90px;font-size:14px;line-height:20px;color:#1a88ff;font-weight:400;white-space:nowrap;"><span class="a">113</span></div>
<div style="position:absolute;left:1443.00px;top:658.90px;font-size:14px;line-height:20px;color:#1f1f1f;font-weight:400;white-space:nowrap;"><span class="a">2025-10-15 19:41:50</span></div>
<div style="position:absolute;left:1623.00px;top:658.90px;font-size:14px;line-height:20px;color:#1f1f1f;font-weight:400;white-space:nowrap;">演示开发员<span class="a">67</span></div>
<div style="position:absolute;left:1779.00px;top:658.90px;font-size:14px;line-height:20px;color:#1f1f1f;font-weight:400;white-space:nowrap;">演示开发员<span class="a">97</span></div>
<div style="position:absolute;left:1935.00px;top:658.90px;font-size:14px;line-height:20px;color:#1f1f1f;font-weight:400;white-space:nowrap;">演示店铺</div>
<div style="position:absolute;left:2087.00px;top:658.90px;font-size:14px;line-height:20px;color:#1a88ff;font-weight:400;white-space:nowrap;">添加受控对象</div>
<svg style="position:absolute;left:2189px;top:663.90px" width="14" height="6" viewBox="0 0 14 6"><g fill="#1a88ff"><circle cx="2" cy="3" r="1.6"/><circle cx="7" cy="3" r="1.6"/><circle cx="12" cy="3" r="1.6"/></g></svg>
<div style="position:absolute;left:186.00px;top:713.80px;width:2045.00px;height:61.40px;background:#fff"></div>
<div style="position:absolute;left:186.00px;top:775.20px;width:2045.00px;height:1.00px;background:#ebeef5"></div>
<div style="position:absolute;left:204.00px;top:724.00px;width:16.80px;height:16.60px;box-sizing:border-box;border:1.5px solid #d9dce3;border-radius:2.5px;background:#fff"></div>
<div style="position:absolute;left:242.50px;top:721.30px;font-size:14px;line-height:20px;color:#1f1f1f;font-weight:400;white-space:nowrap;">自动化规则演示模板<span class="a">1</span></div>
<div style="position:absolute;left:458px;top:724.40px;width:32px;height:17px;border-radius:8.5px;background:#dcdfe6"></div><div style="position:absolute;left:460.5px;top:726.40px;width:12.5px;height:12.5px;border-radius:50%;background:#fff"></div>
<div style="position:absolute;left:578.90px;top:721.30px;font-size:14px;line-height:20px;color:#1f1f1f;font-weight:400;white-space:nowrap;">投放</div>
<div style="position:absolute;right:1407.30px;top:719.80px;font-size:14px;line-height:20px;color:#1a88ff;font-weight:400;white-space:nowrap;"><span class="a">23</span></div>
<div style="position:absolute;left:843.00px;top:721.30px;font-size:14px;line-height:20px;color:#1f1f1f;font-weight:400;white-space:nowrap;">条件：当满足以下【任一】条件组时，条件组<span class="a">1</span>【或】 ：过去<span class="a">7</span>天 【广<span class="a">...</span></div>
<div style="position:absolute;left:843.00px;top:742.40px;font-size:14px;line-height:20px;color:#1f1f1f;font-weight:400;white-space:nowrap;">操作：暂停</div>
<div style="position:absolute;right:807.10px;top:721.30px;font-size:14px;line-height:20px;color:#1a88ff;font-weight:400;white-space:nowrap;"><span class="a">2</span></div>
<div style="position:absolute;left:1443.00px;top:721.30px;font-size:14px;line-height:20px;color:#1f1f1f;font-weight:400;white-space:nowrap;"><span class="a">2025-10-15 19:28:31</span></div>
<div style="position:absolute;left:1623.00px;top:721.30px;font-size:14px;line-height:20px;color:#1f1f1f;font-weight:400;white-space:nowrap;">演示开发员<span class="a">87</span></div>
<div style="position:absolute;left:1779.00px;top:721.30px;font-size:14px;line-height:20px;color:#1f1f1f;font-weight:400;white-space:nowrap;">演示开发员<span class="a">13</span></div>
<div style="position:absolute;left:1935.00px;top:721.30px;font-size:14px;line-height:20px;color:#1f1f1f;font-weight:400;white-space:nowrap;">演示店铺</div>
<div style="position:absolute;left:2087.00px;top:721.30px;font-size:14px;line-height:20px;color:#1a88ff;font-weight:400;white-space:nowrap;">添加受控对象</div>
<svg style="position:absolute;left:2189px;top:726.30px" width="14" height="6" viewBox="0 0 14 6"><g fill="#1a88ff"><circle cx="2" cy="3" r="1.6"/><circle cx="7" cy="3" r="1.6"/><circle cx="12" cy="3" r="1.6"/></g></svg>
<div style="position:absolute;left:186.00px;top:776.20px;width:2045.00px;height:61.40px;background:#fff"></div>
<div style="position:absolute;left:186.00px;top:837.60px;width:2045.00px;height:1.00px;background:#ebeef5"></div>
<div style="position:absolute;left:204.00px;top:786.40px;width:16.80px;height:16.60px;box-sizing:border-box;border:1.5px solid #d9dce3;border-radius:2.5px;background:#fff"></div>
<div style="position:absolute;left:242.50px;top:783.70px;font-size:14px;line-height:20px;color:#1f1f1f;font-weight:400;white-space:nowrap;">自动化规则演示模板<span class="a">66</span></div>
<div style="position:absolute;left:458px;top:786.80px;width:32px;height:17px;border-radius:8.5px;background:#0088ff"></div><div style="position:absolute;left:475px;top:788.80px;width:12.5px;height:12.5px;border-radius:50%;background:#fff"></div>
<div style="position:absolute;left:578.90px;top:783.70px;font-size:14px;line-height:20px;color:#1f1f1f;font-weight:400;white-space:nowrap;">投放</div>
<div style="position:absolute;right:1407.30px;top:782.20px;font-size:14px;line-height:20px;color:#1a88ff;font-weight:400;white-space:nowrap;"><span class="a">11</span></div>
<div style="position:absolute;left:843.00px;top:783.70px;font-size:14px;line-height:20px;color:#1f1f1f;font-weight:400;white-space:nowrap;">条件：当满足以下【任一】条件组时，条件组<span class="a">1</span>【或】 ：过去<span class="a">7</span>天 【广<span class="a">...</span></div>
<div style="position:absolute;left:843.00px;top:804.80px;font-size:14px;line-height:20px;color:#1f1f1f;font-weight:400;white-space:nowrap;">操作：添加到否定投放</div>
<div style="position:absolute;right:807.10px;top:783.70px;font-size:14px;line-height:20px;color:#1a88ff;font-weight:400;white-space:nowrap;"><span class="a">7</span></div>
<div style="position:absolute;left:1443.00px;top:783.70px;font-size:14px;line-height:20px;color:#1f1f1f;font-weight:400;white-space:nowrap;"><span class="a">2025-10-15 18:41:48</span></div>
<div style="position:absolute;left:1623.00px;top:783.70px;font-size:14px;line-height:20px;color:#1f1f1f;font-weight:400;white-space:nowrap;">演示开发员<span class="a">14</span></div>
<div style="position:absolute;left:1779.00px;top:783.70px;font-size:14px;line-height:20px;color:#1f1f1f;font-weight:400;white-space:nowrap;">演示开发员<span class="a">55</span></div>
<div style="position:absolute;left:1935.00px;top:783.70px;font-size:14px;line-height:20px;color:#1f1f1f;font-weight:400;white-space:nowrap;">演示店铺</div>
<div style="position:absolute;left:2087.00px;top:783.70px;font-size:14px;line-height:20px;color:#1a88ff;font-weight:400;white-space:nowrap;">添加受控对象</div>
<svg style="position:absolute;left:2189px;top:788.70px" width="14" height="6" viewBox="0 0 14 6"><g fill="#1a88ff"><circle cx="2" cy="3" r="1.6"/><circle cx="7" cy="3" r="1.6"/><circle cx="12" cy="3" r="1.6"/></g></svg>
<div style="position:absolute;left:186.00px;top:838.60px;width:2045.00px;height:61.40px;background:#fff"></div>
<div style="position:absolute;left:186.00px;top:900.00px;width:2045.00px;height:1.00px;background:#ebeef5"></div>
<div style="position:absolute;left:204.00px;top:848.80px;width:16.80px;height:16.60px;box-sizing:border-box;border:1.5px solid #d9dce3;border-radius:2.5px;background:#fff"></div>
<div style="position:absolute;left:242.50px;top:846.10px;font-size:14px;line-height:20px;color:#1f1f1f;font-weight:400;white-space:nowrap;">自动化规则演示模板<span class="a">97</span></div>
<div style="position:absolute;left:458px;top:849.20px;width:32px;height:17px;border-radius:8.5px;background:#0088ff"></div><div style="position:absolute;left:475px;top:851.20px;width:12.5px;height:12.5px;border-radius:50%;background:#fff"></div>
<div style="position:absolute;left:578.90px;top:846.10px;font-size:14px;line-height:20px;color:#1f1f1f;font-weight:400;white-space:nowrap;">搜索词</div>
<div style="position:absolute;right:1407.30px;top:844.60px;font-size:14px;line-height:20px;color:#1a88ff;font-weight:400;white-space:nowrap;"><span class="a">15</span></div>
<div style="position:absolute;left:843.00px;top:846.10px;font-size:14px;line-height:20px;color:#1f1f1f;font-weight:400;white-space:nowrap;">条件：当满足以下【任一】条件组时，条件组<span class="a">1</span>【且】 ：过去<span class="a">7</span>天 【广<span class="a">...</span></div>
<div style="position:absolute;left:843.00px;top:867.20px;font-size:14px;line-height:20px;color:#1f1f1f;font-weight:400;white-space:nowrap;">操作：添加到否定投放</div>
<div style="position:absolute;right:807.10px;top:846.10px;font-size:14px;line-height:20px;color:#1a88ff;font-weight:400;white-space:nowrap;"><span class="a">0</span></div>
<div style="position:absolute;left:1443.00px;top:846.10px;font-size:14px;line-height:20px;color:#1f1f1f;font-weight:400;white-space:nowrap;"><span class="a">2025-10-21 14:14:08</span></div>
<div style="position:absolute;left:1623.00px;top:846.10px;font-size:14px;line-height:20px;color:#1f1f1f;font-weight:400;white-space:nowrap;">演示开发员<span class="a">43</span></div>
<div style="position:absolute;left:1779.00px;top:846.10px;font-size:14px;line-height:20px;color:#1f1f1f;font-weight:400;white-space:nowrap;">演示开发员<span class="a">81</span></div>
<div style="position:absolute;left:1935.00px;top:846.10px;font-size:14px;line-height:20px;color:#1f1f1f;font-weight:400;white-space:nowrap;">演示店铺</div>
<div style="position:absolute;left:2087.00px;top:846.10px;font-size:14px;line-height:20px;color:#1a88ff;font-weight:400;white-space:nowrap;">添加受控对象</div>
<svg style="position:absolute;left:2189px;top:851.10px" width="14" height="6" viewBox="0 0 14 6"><g fill="#1a88ff"><circle cx="2" cy="3" r="1.6"/><circle cx="7" cy="3" r="1.6"/><circle cx="12" cy="3" r="1.6"/></g></svg>
<div style="position:absolute;left:186.00px;top:901.00px;width:2045.00px;height:61.40px;background:#fff"></div>
<div style="position:absolute;left:186.00px;top:962.40px;width:2045.00px;height:1.00px;background:#ebeef5"></div>
<div style="position:absolute;left:204.00px;top:911.20px;width:16.80px;height:16.60px;box-sizing:border-box;border:1.5px solid #d9dce3;border-radius:2.5px;background:#fff"></div>
<div style="position:absolute;left:242.50px;top:908.50px;font-size:14px;line-height:20px;color:#1f1f1f;font-weight:400;white-space:nowrap;">自动化规则演示模板<span class="a">90</span></div>
<div style="position:absolute;left:458px;top:911.60px;width:32px;height:17px;border-radius:8.5px;background:#0088ff"></div><div style="position:absolute;left:475px;top:913.60px;width:12.5px;height:12.5px;border-radius:50%;background:#fff"></div>
<div style="position:absolute;left:578.90px;top:908.50px;font-size:14px;line-height:20px;color:#1f1f1f;font-weight:400;white-space:nowrap;">搜索词</div>
<div style="position:absolute;right:1407.30px;top:907.00px;font-size:14px;line-height:20px;color:#1a88ff;font-weight:400;white-space:nowrap;"><span class="a">77</span></div>
<div style="position:absolute;left:843.00px;top:908.50px;font-size:14px;line-height:20px;color:#1f1f1f;font-weight:400;white-space:nowrap;">条件：当满足以下【任一】条件组时，条件组<span class="a">1</span>【且】 ：过去<span class="a">7</span>天 【广<span class="a">...</span></div>
<div style="position:absolute;left:843.00px;top:929.60px;font-size:14px;line-height:20px;color:#1f1f1f;font-weight:400;white-space:nowrap;">操作：添加至投放 搜索词所在广告组 精确匹配 按目标广告组默认竞价<span class="a">...</span></div>
<div style="position:absolute;right:807.10px;top:908.50px;font-size:14px;line-height:20px;color:#1a88ff;font-weight:400;white-space:nowrap;"><span class="a">0</span></div>
<div style="position:absolute;left:1443.00px;top:908.50px;font-size:14px;line-height:20px;color:#1f1f1f;font-weight:400;white-space:nowrap;"><span class="a">2025-10-20 19:34:54</span></div>
<div style="position:absolute;left:1623.00px;top:908.50px;font-size:14px;line-height:20px;color:#1f1f1f;font-weight:400;white-space:nowrap;">演示开发员<span class="a">36</span></div>
<div style="position:absolute;left:1779.00px;top:908.50px;font-size:14px;line-height:20px;color:#1f1f1f;font-weight:400;white-space:nowrap;">演示开发员<span class="a">57</span></div>
<div style="position:absolute;left:1935.00px;top:908.50px;font-size:14px;line-height:20px;color:#1f1f1f;font-weight:400;white-space:nowrap;">演示店铺</div>
<div style="position:absolute;left:2087.00px;top:908.50px;font-size:14px;line-height:20px;color:#1a88ff;font-weight:400;white-space:nowrap;">添加受控对象</div>
<svg style="position:absolute;left:2189px;top:913.50px" width="14" height="6" viewBox="0 0 14 6"><g fill="#1a88ff"><circle cx="2" cy="3" r="1.6"/><circle cx="7" cy="3" r="1.6"/><circle cx="12" cy="3" r="1.6"/></g></svg>
<div style="position:absolute;left:186.00px;top:963.40px;width:2045.00px;height:61.40px;background:#fff"></div>
<div style="position:absolute;left:186.00px;top:1024.80px;width:2045.00px;height:1.00px;background:#ebeef5"></div>
<div style="position:absolute;left:204.00px;top:973.60px;width:16.80px;height:16.60px;box-sizing:border-box;border:1.5px solid #d9dce3;border-radius:2.5px;background:#fff"></div>
<div style="position:absolute;left:242.50px;top:970.90px;font-size:14px;line-height:20px;color:#1f1f1f;font-weight:400;white-space:nowrap;">自动化规则演示模板<span class="a">45</span></div>
<div style="position:absolute;left:458px;top:974.00px;width:32px;height:17px;border-radius:8.5px;background:#0088ff"></div><div style="position:absolute;left:475px;top:976.00px;width:12.5px;height:12.5px;border-radius:50%;background:#fff"></div>
<div style="position:absolute;left:578.90px;top:970.90px;font-size:14px;line-height:20px;color:#1f1f1f;font-weight:400;white-space:nowrap;">搜索词</div>
<div style="position:absolute;right:1407.30px;top:969.40px;font-size:14px;line-height:20px;color:#1a88ff;font-weight:400;white-space:nowrap;"><span class="a">18</span></div>
<div style="position:absolute;left:843.00px;top:970.90px;font-size:14px;line-height:20px;color:#1f1f1f;font-weight:400;white-space:nowrap;">条件：当满足以下【任一】条件组时，条件组<span class="a">1</span>【且】 ：过去<span class="a">7</span>天 【广<span class="a">...</span></div>
<div style="position:absolute;left:843.00px;top:992.00px;font-size:14px;line-height:20px;color:#1f1f1f;font-weight:400;white-space:nowrap;">操作：添加至投放 搜索词所在广告组 广泛匹配 按固定值设置 <span class="a">US$1</span></div>
<div style="position:absolute;right:807.10px;top:970.90px;font-size:14px;line-height:20px;color:#1a88ff;font-weight:400;white-space:nowrap;"><span class="a">0</span></div>
<div style="position:absolute;left:1443.00px;top:970.90px;font-size:14px;line-height:20px;color:#1f1f1f;font-weight:400;white-space:nowrap;"><span class="a">2025-10-16 23:13:42</span></div>
<div style="position:absolute;left:1623.00px;top:970.90px;font-size:14px;line-height:20px;color:#1f1f1f;font-weight:400;white-space:nowrap;">演示开发员<span class="a">54</span></div>
<div style="position:absolute;left:1779.00px;top:970.90px;font-size:14px;line-height:20px;color:#1f1f1f;font-weight:400;white-space:nowrap;">演示开发员<span class="a">48</span></div>
<div style="position:absolute;left:1935.00px;top:970.90px;font-size:14px;line-height:20px;color:#1f1f1f;font-weight:400;white-space:nowrap;">演示店铺</div>
<div style="position:absolute;left:2087.00px;top:970.90px;font-size:14px;line-height:20px;color:#1a88ff;font-weight:400;white-space:nowrap;">添加受控对象</div>
<svg style="position:absolute;left:2189px;top:975.90px" width="14" height="6" viewBox="0 0 14 6"><g fill="#1a88ff"><circle cx="2" cy="3" r="1.6"/><circle cx="7" cy="3" r="1.6"/><circle cx="12" cy="3" r="1.6"/></g></svg>
<div style="position:absolute;left:186.00px;top:1025.80px;width:2045.00px;height:61.40px;background:#fff"></div>
<div style="position:absolute;left:186.00px;top:1087.20px;width:2045.00px;height:1.00px;background:#ebeef5"></div>
<div style="position:absolute;left:204.00px;top:1036.00px;width:16.80px;height:16.60px;box-sizing:border-box;border:1.5px solid #d9dce3;border-radius:2.5px;background:#fff"></div>
<div style="position:absolute;left:242.50px;top:1033.30px;font-size:14px;line-height:20px;color:#1f1f1f;font-weight:400;white-space:nowrap;">自动化规则演示模板<span class="a">63</span></div>
<div style="position:absolute;left:458px;top:1036.40px;width:32px;height:17px;border-radius:8.5px;background:#0088ff"></div><div style="position:absolute;left:475px;top:1038.40px;width:12.5px;height:12.5px;border-radius:50%;background:#fff"></div>
<div style="position:absolute;left:578.90px;top:1033.30px;font-size:14px;line-height:20px;color:#1f1f1f;font-weight:400;white-space:nowrap;">搜索词</div>
<div style="position:absolute;right:1407.30px;top:1031.80px;font-size:14px;line-height:20px;color:#1a88ff;font-weight:400;white-space:nowrap;"><span class="a">52</span></div>
<div style="position:absolute;left:843.00px;top:1033.30px;font-size:14px;line-height:20px;color:#1f1f1f;font-weight:400;white-space:nowrap;">条件：当满足以下【任一】条件组时，条件组<span class="a">1</span>【且】 ：过去<span class="a">7</span>天 【广<span class="a">...</span></div>
<div style="position:absolute;left:843.00px;top:1054.40px;font-size:14px;line-height:20px;color:#1f1f1f;font-weight:400;white-space:nowrap;">操作：添加至投放 选择指定广告组（演示广告组<span class="a">5</span>） 精确匹配 按目标<span class="a">...</span></div>
<div style="position:absolute;right:807.10px;top:1033.30px;font-size:14px;line-height:20px;color:#1a88ff;font-weight:400;white-space:nowrap;"><span class="a">3</span></div>
<div style="position:absolute;left:1443.00px;top:1033.30px;font-size:14px;line-height:20px;color:#1f1f1f;font-weight:400;white-space:nowrap;"><span class="a">2025-10-16 22:42:20</span></div>
<div style="position:absolute;left:1623.00px;top:1033.30px;font-size:14px;line-height:20px;color:#1f1f1f;font-weight:400;white-space:nowrap;">演示开发员<span class="a">86</span></div>
<div style="position:absolute;left:1779.00px;top:1033.30px;font-size:14px;line-height:20px;color:#1f1f1f;font-weight:400;white-space:nowrap;">演示开发员<span class="a">28</span></div>
<div style="position:absolute;left:1935.00px;top:1033.30px;font-size:14px;line-height:20px;color:#1f1f1f;font-weight:400;white-space:nowrap;">演示店铺</div>
<div style="position:absolute;left:2087.00px;top:1033.30px;font-size:14px;line-height:20px;color:#1a88ff;font-weight:400;white-space:nowrap;">添加受控对象</div>
<svg style="position:absolute;left:2189px;top:1038.30px" width="14" height="6" viewBox="0 0 14 6"><g fill="#1a88ff"><circle cx="2" cy="3" r="1.6"/><circle cx="7" cy="3" r="1.6"/><circle cx="12" cy="3" r="1.6"/></g></svg>
<div style="position:absolute;left:2060.00px;top:229.90px;width:18.00px;height:912.10px;background:linear-gradient(90deg,rgba(0,0,0,0),rgba(0,0,0,0.045))"></div>
<div style="position:absolute;left:185.50px;top:1143.00px;width:1987.50px;height:8.80px;background:#dcdde0;border-radius:2px 4.4px 4.4px 2px"></div>
<div style="position:absolute;left:2173.00px;top:1151.30px;width:58.00px;height:1.00px;background:#eef0f4"></div>
<svg style="position:absolute;left:2195px;top:1108px" width="34" height="34" viewBox="0 0 34 34">
<defs><linearGradient id="hg" x1="0" y1="0" x2="1" y2="1"><stop offset="0" stop-color="#9dd0ff"/><stop offset="0.5" stop-color="#3aa0ff"/><stop offset="1" stop-color="#0068d6"/></linearGradient></defs>
<circle cx="16.6" cy="16.5" r="15.8" fill="url(#hg)"/><polygon points="18,31 29.5,32.3 26,27" fill="#0a6fdc"/>
<text x="16.8" y="24.5" text-anchor="middle" font-family="Liberation Sans" font-weight="bold" font-size="21" fill="#fff">?</text></svg>
<div style="position:absolute;left:1817.00px;top:1166.50px;font-size:14px;line-height:20px;color:#8c8c8c;font-weight:400;white-space:nowrap;">共</div>
<div style="position:absolute;left:1841.50px;top:1166.50px;font-size:14px;line-height:20px;color:#1f1f1f;font-weight:400;white-space:nowrap;"><span class="a">13</span></div>
<div style="position:absolute;left:1870.50px;top:1166.50px;font-size:14px;line-height:20px;color:#8c8c8c;font-weight:400;white-space:nowrap;">条</div>
<svg style="position:absolute;left:1905px;top:1169px" width="12" height="15" viewBox="0 0 12 15"><polyline points="9,1.5 3,7.5 9,13.5" stroke="#a0a0a0" stroke-width="1.4" fill="none"/></svg>
<div style="position:absolute;left:1929.00px;top:1162.00px;width:29.00px;height:27.00px;background:#e6f4ff;border-radius:3px 3px 0 0"></div>
<div style="position:absolute;left:1929.00px;top:1166.50px;font-size:14px;line-height:20px;color:#1a88ff;font-weight:700;white-space:nowrap;width:29px;text-align:center"><span class="a">1</span></div>
<svg style="position:absolute;left:1971px;top:1169px" width="12" height="15" viewBox="0 0 12 15"><polyline points="3,1.5 9,7.5 3,13.5" stroke="#a0a0a0" stroke-width="1.4" fill="none"/></svg>
<div style="position:absolute;left:2005.00px;top:1164.00px;width:94.00px;height:25.00px;background:#f5f5f5;border-radius:4px 4px 0 0"></div>
<div style="position:absolute;left:2019.00px;top:1168.00px;font-size:14px;line-height:20px;color:#595959;font-weight:400;white-space:nowrap;"><span class="a">20</span>条<span class="a">/</span>页</div>
<svg style="position:absolute;left:2080.00px;top:1175.00px" width="11.00" height="7.50" viewBox="0 0 11.00 7.50"><polyline points="1.6,1.6 5.50,5.30 9.40,1.6" stroke="#595959" stroke-width="1.5" fill="none"/></svg>
<div style="position:absolute;left:2119.50px;top:1167.00px;font-size:14px;line-height:20px;color:#1f1f1f;font-weight:400;white-space:nowrap;">前往</div>
<div style="position:absolute;left:2153.00px;top:1163.00px;width:41.50px;height:26.00px;background:#f5f5f5;border-radius:4px 4px 0 0"></div>
<div style="position:absolute;left:2153.00px;top:1166.00px;font-size:14px;line-height:20px;color:#595959;font-weight:400;white-space:nowrap;width:41.5px;text-align:center"><span class="a">1</span></div>
<div style="position:absolute;left:2201.00px;top:1168.00px;font-size:14px;line-height:20px;color:#1f1f1f;font-weight:400;white-space:nowrap;">页</div>
<div style="position:absolute;left:2023.20px;top:270.30px;width:182.40px;height:51.00px;box-sizing:border-box;border:2.3px solid #ee2a2a"></div>
<div style="position:absolute;left:1830.00px;top:355.00px;width:218.50px;height:49.50px;background:#666;border-radius:3px"></div>
<svg style="position:absolute;left:1821px;top:372px" width="10" height="17" viewBox="0 0 10 17"><polygon points="10,0 1.5,8.5 10,17" fill="#666"/></svg>
<div style="position:absolute;left:1839.00px;top:366.00px;font-size:24px;line-height:30px;color:#ffffff;font-weight:400;white-space:nowrap;letter-spacing:0">点击添加受控对象</div>
<div style="position:absolute;left:1786.00px;top:365.00px;width:30.00px;height:30.00px;background:#f23a3a;border-radius:50%"></div>
<div style="position:absolute;left:1786.00px;top:370.00px;font-size:17px;line-height:20px;color:#ffffff;font-weight:400;white-space:nowrap;letter-spacing:0;width:30px;text-align:center"><span class="a">1</span></div>
</body></html>
